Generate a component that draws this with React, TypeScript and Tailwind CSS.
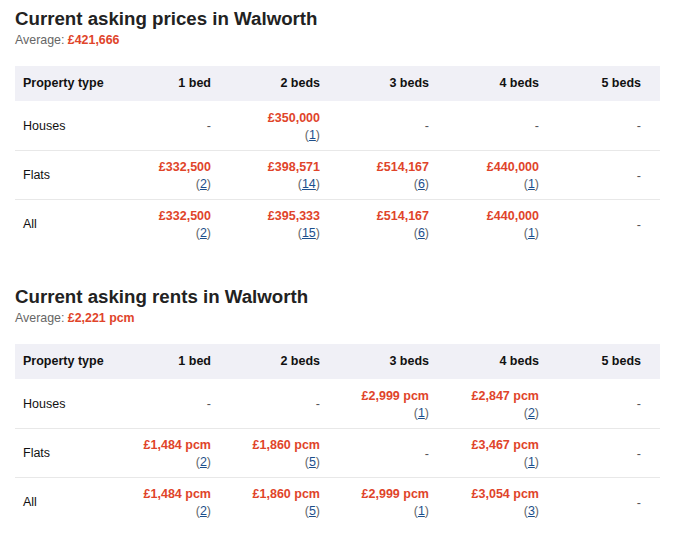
const RED = "text-[#e0442a]";

type Cell = { value: string; count: string } | null;

type Section = {
  title: string;
  average: string;
  rows: { label: string; cells: Cell[] }[];
};

const sections: Section[] = [
  {
    title: "Current asking prices in Walworth",
    average: "£421,666",
    rows: [
      { label: "Houses", cells: [null, { value: "£350,000", count: "1" }, null, null, null] },
      {
        label: "Flats",
        cells: [
          { value: "£332,500", count: "2" },
          { value: "£398,571", count: "14" },
          { value: "£514,167", count: "6" },
          { value: "£440,000", count: "1" },
          null,
        ],
      },
      {
        label: "All",
        cells: [
          { value: "£332,500", count: "2" },
          { value: "£395,333", count: "15" },
          { value: "£514,167", count: "6" },
          { value: "£440,000", count: "1" },
          null,
        ],
      },
    ],
  },
  {
    title: "Current asking rents in Walworth",
    average: "£2,221 pcm",
    rows: [
      {
        label: "Houses",
        cells: [null, null, { value: "£2,999 pcm", count: "1" }, { value: "£2,847 pcm", count: "2" }, null],
      },
      {
        label: "Flats",
        cells: [
          { value: "£1,484 pcm", count: "2" },
          { value: "£1,860 pcm", count: "5" },
          null,
          { value: "£3,467 pcm", count: "1" },
          null,
        ],
      },
      {
        label: "All",
        cells: [
          { value: "£1,484 pcm", count: "2" },
          { value: "£1,860 pcm", count: "5" },
          { value: "£2,999 pcm", count: "1" },
          { value: "£3,054 pcm", count: "3" },
          null,
        ],
      },
    ],
  },
];

const headers = ["1 bed", "2 beds", "3 beds", "4 beds", "5 beds"];
// widths of the bed columns (px)
const colWidths = ["w-[109px]", "w-[109px]", "w-[109px]", "w-[110px]", "w-[113px]"];

function ValueCell({ cell, last }: { cell: Cell; last: boolean }) {
  return (
    <td className={`pt-[3px] text-right align-middle ${last ? "pr-[19px]" : "pr-2"}`}>
      {cell ? (
        <div className="flex flex-col items-end leading-[17px]">
          <span className={`font-bold ${RED}`}>{cell.value}</span>
          <span className="text-[#666]">
            (<a className="text-[#1c4f8c] underline">{cell.count}</a>)
          </span>
        </div>
      ) : (
        <span className="text-[#555]">-</span>
      )}
    </td>
  );
}

function PriceTable({ section }: { section: Section }) {
  return (
    <section>
      <h2 className="text-[18.7px] font-bold leading-6 text-[#222] pt-[7px]">{section.title}</h2>
      <p className="mt-[2px] text-[12.4px] leading-[14px] text-[#666]">
        Average: <span className={`font-bold ${RED}`}>{section.average}</span>
      </p>
      <table className="mt-[19px] w-[645px] table-fixed border-collapse text-[12.5px] text-[#111]">
        <colgroup>
          <col className="w-[95px]" />
          {colWidths.map((w, i) => (
            <col key={i} className={w} />
          ))}
        </colgroup>
        <thead>
          <tr className="h-[35px] bg-[#f0f0f6]">
            <th className="pl-2 text-left font-bold">Property type</th>
            {headers.map((h, i) => (
              <th key={h} className={`text-right font-bold ${i === 4 ? "pr-[19px]" : "pr-2"}`}>
                {h}
              </th>
            ))}
          </tr>
        </thead>
        <tbody>
          {section.rows.map((row, r) => (
            <tr key={row.label} className={`h-[49px] ${r > 0 ? "border-t border-[#e8e8e8]" : ""}`}>
              <td className="pl-2 pt-[2px] text-left">{row.label}</td>
              {row.cells.map((c, i) => (
                <ValueCell key={i} cell={c} last={i === 4} />
              ))}
            </tr>
          ))}
        </tbody>
      </table>
    </section>
  );
}

export default function App() {
  return (
    <div className="min-h-screen bg-white px-[15px] font-['Liberation_Sans',Arial,sans-serif]">
      <div className="flex flex-col gap-[30px]">
        {sections.map((s) => (
          <PriceTable key={s.title} section={s} />
        ))}
      </div>
    </div>
  );
}
